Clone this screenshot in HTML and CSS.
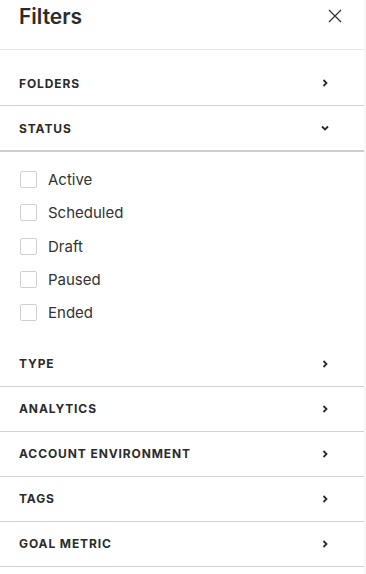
FILE: index.html
```html
<!DOCTYPE html>
<html lang="en">
<head>
  <title>Filters</title>
  <meta charset="utf-8">
  <meta name="viewport" content="width=device-width, initial-scale=1">
  <link rel="stylesheet" href="styles.css">
</head>
<body>
  <div class="panel">
    <div class="panel-header">
      <h1 class="panel-title">Filters</h1>
      <button class="close-button" aria-label="Close">
        <svg width="14" height="14" viewBox="0 0 14 14"><path d="M1 1L13 13M13 1L1 13" stroke="#333" stroke-width="1.3" fill="none"/></svg>
      </button>
    </div>

    <div class="sections">
      <div class="section">
        <span>Folders</span>
        <svg class="chevron" width="8" height="8" viewBox="0 0 8 8"><path d="M2.5 1L5.5 4L2.5 7" stroke="#2b2b2b" stroke-width="1.8" fill="none"/></svg>
      </div>
      <div class="section section-open">
        <span>Status</span>
        <svg class="chevron" width="8" height="8" viewBox="0 0 8 8"><path d="M1 2.5L4 5.5L7 2.5" stroke="#2b2b2b" stroke-width="1.8" fill="none"/></svg>
      </div>
      <div class="options">
        <label class="option"><span class="checkbox"></span>Active</label>
        <label class="option"><span class="checkbox"></span>Scheduled</label>
        <label class="option"><span class="checkbox"></span>Draft</label>
        <label class="option"><span class="checkbox"></span>Paused</label>
        <label class="option"><span class="checkbox"></span>Ended</label>
      </div>
      <div class="section">
        <span>Type</span>
        <svg class="chevron" width="8" height="8" viewBox="0 0 8 8"><path d="M2.5 1L5.5 4L2.5 7" stroke="#2b2b2b" stroke-width="1.8" fill="none"/></svg>
      </div>
      <div class="section">
        <span>Analytics</span>
        <svg class="chevron" width="8" height="8" viewBox="0 0 8 8"><path d="M2.5 1L5.5 4L2.5 7" stroke="#2b2b2b" stroke-width="1.8" fill="none"/></svg>
      </div>
      <div class="section">
        <span>Account environment</span>
        <svg class="chevron" width="8" height="8" viewBox="0 0 8 8"><path d="M2.5 1L5.5 4L2.5 7" stroke="#2b2b2b" stroke-width="1.8" fill="none"/></svg>
      </div>
      <div class="section">
        <span>Tags</span>
        <svg class="chevron" width="8" height="8" viewBox="0 0 8 8"><path d="M2.5 1L5.5 4L2.5 7" stroke="#2b2b2b" stroke-width="1.8" fill="none"/></svg>
      </div>
      <div class="section">
        <span>Goal metric</span>
        <svg class="chevron" width="8" height="8" viewBox="0 0 8 8"><path d="M2.5 1L5.5 4L2.5 7" stroke="#2b2b2b" stroke-width="1.8" fill="none"/></svg>
      </div>
    </div>
  </div>
</body>
</html>
```

FILE: styles.css
```css
*, *::before, *::after {
  margin: 0;
  padding: 0;
  box-sizing: border-box;
}

body {
  background-color: #F6F6F6;
  color: #2B2B2B;
  font-family: "Inter", "Roboto", sans-serif;
}

.panel {
  width: 364px;
  min-height: 574px;
  background-color: #FFFFFF;
}

.panel-header {
  display: flex;
  align-items: center;
  justify-content: space-between;
  height: 50px;
  padding: 0 22px 17px 19px;
  border-bottom: 1px solid #E8E8E8;
}

.panel-title {
  font-size: 21px;
  font-weight: 600;
  line-height: 1;
}

.close-button {
  display: flex;
  border: none;
  background: none;
  cursor: pointer;
}

.sections {
  padding-top: 11px;
}

.section {
  display: flex;
  align-items: center;
  justify-content: space-between;
  height: 45px;
  padding: 0 35px 0 19px;
  border-bottom: 1px solid #D2D2D2;
  font-size: 12px;
  font-weight: 700;
  letter-spacing: 0.9px;
  text-transform: uppercase;
}

.section-open {
  height: 46px;
  border-bottom: 2px solid #CDCDCD;
}

.options {
  padding: 11px 0 12.5px 20px;
}

.option {
  display: flex;
  align-items: center;
  height: 33.3px;
  font-size: 15px;
  color: #333333;
  cursor: pointer;
}

.checkbox {
  width: 17px;
  height: 17px;
  margin-right: 11px;
  border: 1px solid #D0D0D0;
  border-radius: 2px;
}
```
